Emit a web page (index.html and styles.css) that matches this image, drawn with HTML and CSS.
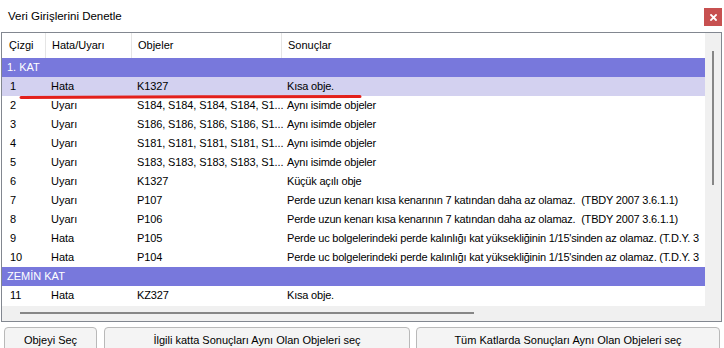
FILE: index.html
```html
<!DOCTYPE html>
<html lang="tr">
<head>
<meta charset="utf-8">
<title>Veri Girişlerini Denetle</title>
<link rel="stylesheet" href="styles.css">
</head>
<body>
<div class="window">
  <div class="titlebar">
    <span class="title">Veri Girişlerini Denetle</span>
    <button class="close" aria-label="Kapat">
      <svg width="7" height="7" viewBox="0 0 7 7"><path d="M1 1L6 6M6 1L1 6" stroke="#fff" stroke-width="1.8" stroke-linecap="square"/></svg>
    </button>
  </div>
  <div class="listbox">
    <div class="content">
      <div class="row head">
        <div class="c c1">Çizgi</div>
        <div class="c">Hata/Uyarı</div>
        <div class="c">Objeler</div>
        <div class="c last">Sonuçlar</div>
      </div>
      <div class="group">1. KAT</div>
      <div class="row sel">
        <div class="c c1">1</div><div class="c">Hata</div><div class="c obj">K1327</div><div class="c res">Kısa obje.</div>
      </div>
      <div class="row">
        <div class="c c1">2</div><div class="c">Uyarı</div><div class="c obj">S184, S184, S184, S184, S1...</div><div class="c res">Aynı isimde objeler</div>
      </div>
      <div class="row">
        <div class="c c1">3</div><div class="c">Uyarı</div><div class="c obj">S186, S186, S186, S186, S1...</div><div class="c res">Aynı isimde objeler</div>
      </div>
      <div class="row">
        <div class="c c1">4</div><div class="c">Uyarı</div><div class="c obj">S181, S181, S181, S181, S1...</div><div class="c res">Aynı isimde objeler</div>
      </div>
      <div class="row">
        <div class="c c1">5</div><div class="c">Uyarı</div><div class="c obj">S183, S183, S183, S183, S1...</div><div class="c res">Aynı isimde objeler</div>
      </div>
      <div class="row">
        <div class="c c1">6</div><div class="c">Uyarı</div><div class="c obj">K1327</div><div class="c res">Küçük açılı obje</div>
      </div>
      <div class="row">
        <div class="c c1">7</div><div class="c">Uyarı</div><div class="c obj">P107</div><div class="c res">Perde uzun kenarı kısa kenarının 7 katından daha az olamaz.&nbsp; (TBDY 2007 3.6.1.1)</div>
      </div>
      <div class="row">
        <div class="c c1">8</div><div class="c">Uyarı</div><div class="c obj">P106</div><div class="c res">Perde uzun kenarı kısa kenarının 7 katından daha az olamaz.&nbsp; (TBDY 2007 3.6.1.1)</div>
      </div>
      <div class="row">
        <div class="c c1">9</div><div class="c">Hata</div><div class="c obj">P105</div><div class="c res">Perde uc bolgelerindeki perde kalınlığı kat yüksekliğinin 1/15'sinden az olamaz. (T.D.Y. 3</div>
      </div>
      <div class="row">
        <div class="c c1">10</div><div class="c">Hata</div><div class="c obj">P104</div><div class="c res">Perde uc bolgelerindeki perde kalınlığı kat yüksekliğinin 1/15'sinden az olamaz. (T.D.Y. 3</div>
      </div>
      <div class="group">ZEMİN KAT</div>
      <div class="row">
        <div class="c c1">11</div><div class="c">Hata</div><div class="c obj">KZ327</div><div class="c res">Kısa obje.</div>
      </div>
      <svg class="mark" width="344" height="6" viewBox="0 0 344 6"><path d="M2 3.4 C 80 3.0, 250 2.4, 341 2.6" stroke="#e3201b" stroke-width="3" fill="none" stroke-linecap="round"/></svg>
    </div>
    <div class="vscroll"><div class="vthumb"></div></div>
    <div class="hscroll"><div class="hthumb"></div></div>
    <div class="corner"></div>
  </div>
  <div class="buttons">
    <button class="btn b1">Objeyi Seç</button>
    <button class="btn b2">İlgili katta Sonuçları Aynı Olan Objeleri seç</button>
    <button class="btn b3">Tüm Katlarda Sonuçları Aynı Olan Objeleri seç</button>
  </div>
</div>
</body>
</html>
```
FILE: styles.css
```css
* { box-sizing: border-box; }
html, body { margin: 0; padding: 0; background: #fff; }
body {
  width: 724px;
  height: 348px;
  overflow: hidden;
  font-family: "Liberation Sans", Arial, sans-serif;
  font-size: 11px;
  color: #000;
}
.window { display: flex; flex-direction: column; }
.titlebar {
  height: 32px;
  display: flex;
  align-items: flex-start;
  justify-content: space-between;
}
.title {
  font-size: 11.5px;
  padding-left: 8px;
  margin-top: 9px;
  line-height: 14px;
}
.close {
  margin-top: 8px;
  margin-right: 2px;
  width: 18px;
  height: 18px;
  border: 0;
  padding: 0;
  background: #c75050;
  display: flex;
  align-items: center;
  justify-content: center;
}
.listbox {
  margin: 0 2px 0 1px;
  height: 290px;
  border: 1px solid #828790;
  display: grid;
  grid-template-columns: 703px 16px;
  grid-template-rows: 273px 15px;
  overflow: hidden;
}
.content {
  position: relative;
  overflow: hidden;
  background: #fff;
}
.row {
  display: grid;
  grid-template-columns: 44px 86px 150px 1fr;
  height: 19px;
  line-height: 19px;
  white-space: nowrap;
}
.row .c { padding-left: 5px; overflow: visible; }
.row .c1 { padding-left: 8px; }
.row .obj { letter-spacing: -0.12px; }
.row .res { letter-spacing: -0.2px; }
.row.head { height: 25px; line-height: 25px; }
.row.head .c { border-right: 1px solid #e5e5e5; padding-left: 6px; }
.row.head .c1 { padding-left: 7px; }
.row.head .last { border-right: 0; }
.row.sel { background: #d3d1f0; }
.group {
  height: 19px;
  line-height: 19px;
  background: #7878dc;
  color: #fff;
  padding-left: 5px;
}
.mark {
  position: absolute;
  left: 17px;
  top: 61px;
}
.vscroll {
  background: #f0f0f0;
  position: relative;
}
.vthumb {
  position: absolute;
  left: 7px;
  top: 18px;
  width: 2px;
  height: 134px;
  background: #868686;
}
.hscroll {
  background: #f0f0f0;
  position: relative;
}
.hthumb {
  position: absolute;
  left: 18px;
  top: 6px;
  width: 454px;
  height: 2px;
  background: #868686;
}
.corner { background: #f0f0f0; }
.buttons {
  display: flex;
  padding-left: 4px;
  margin-top: 5px;
}
.btn {
  height: 25px;
  border: 1px solid #b9b9b9;
  border-radius: 4px;
  background: #f4f4f4;
  font-family: "Liberation Sans", Arial, sans-serif;
  font-size: 11px;
  color: #000;
  padding: 0;
}
.b1 { width: 93px; }
.b2 { width: 306px; margin-left: 7px; }
.b3 { width: 304px; margin-left: 6px; }
```
